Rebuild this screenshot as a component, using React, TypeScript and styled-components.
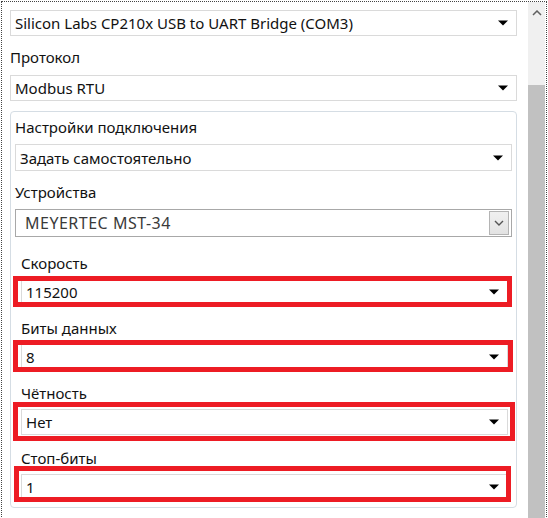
import React from "react";
import styled, { createGlobalStyle } from "styled-components";

const Global = createGlobalStyle`
  html, body { margin: 0; padding: 0; background: #ffffff; }
  body { font-family: "Noto Sans", "Open Sans", sans-serif; color: #111; }
`;

const Frame = styled.div`
  box-sizing: border-box;
  margin: 1px 0 0 1px;
  width: 546px;
  height: 520px;
  border: 1px dotted #444;
  border-bottom: none;
  display: grid;
  grid-template-columns: 1fr 17px;
  padding-right: 1px;
  overflow: hidden;
`;

const Content = styled.div`
  display: flex;
  flex-direction: column;
  padding: 8px 11px 0 8px;
  min-width: 0;
`;

const Label = styled.div<{ $top?: number; $bottom?: number }>`
  font-size: 15px;
  line-height: 22px;
  padding-top: ${(p) => p.$top ?? 10}px;
  padding-bottom: ${(p) => p.$bottom ?? 7}px;
  white-space: nowrap;
`;

const SelectBox = styled.div<{ $h?: number }>`
  box-sizing: border-box;
  position: relative;
  height: ${(p) => p.$h ?? 26}px;
  border: 1px solid #dadada;
  background: #fff;
  display: flex;
  align-items: center;
  padding: 0 8px 0 4px;
  font-size: 15px;
  color: #111;
  white-space: nowrap;
`;

const SelectText = styled.span`
  flex: 1;
  overflow: hidden;
`;

const Arrow = styled.svg`
  width: 10px;
  height: 6px;
  flex: none;
`;

const Group = styled.div`
  box-sizing: border-box;
  margin-top: 10px;
  border: 1px solid #d5dde4;
  border-radius: 4px;
  padding: 0 4px 0 4px;
  height: 397px;
  display: flex;
  flex-direction: column;
`;

const DeviceBox = styled.div`
  box-sizing: border-box;
  height: 28px;
  border: 1px solid #a8a8a8;
  background: #fff;
  display: flex;
  align-items: center;
  padding: 0 2px 0 9px;
  font-size: 16px;
  letter-spacing: 0.5px;
  color: #3a3a3a;
  white-space: nowrap;
`;

const DropButton = styled.div`
  box-sizing: border-box;
  width: 20px;
  height: 24px;
  border: 1px solid #b4b4b4;
  background: linear-gradient(#f0f0f0, #e3e3e3);
  display: flex;
  align-items: center;
  justify-content: center;
`;

const Nested = styled.div`
  display: flex;
  flex-direction: column;
  padding: 0 4px 0 6px;
`;

const Marked = styled.div`
  position: relative;
`;

const Highlight = styled.div<{ $t: number; $b: number; $l: number; $r: number }>`
  position: absolute;
  top: ${(p) => -p.$t}px;
  bottom: ${(p) => -p.$b}px;
  left: ${(p) => -p.$l}px;
  right: ${(p) => -p.$r}px;
  border: 5px solid #ed1c24;
  pointer-events: none;
`;

const Scrollbar = styled.div`
  background: #f0f0f0;
  display: flex;
  flex-direction: column;
`;

const ScrollUp = styled.div`
  height: 83px;
  display: flex;
  justify-content: center;
  padding-top: 8px;
  box-sizing: border-box;
`;

const Thumb = styled.div`
  flex: 1;
  background: #c1c1c1;
`;

const DownTriangle = () => (
  <Arrow viewBox="0 0 10 6">
    <path d="M0 0.5 H10 L5 5.5 Z" fill="#000" />
  </Arrow>
);

const Select = ({ value, h }: { value: string; h?: number }) => (
  <SelectBox $h={h}>
    <SelectText>{value}</SelectText>
    <DownTriangle />
  </SelectBox>
);

type Mark = { t: number; b: number; l: number; r: number };

const Field = ({ label, value, mark, top = 12, bottom = 5 }: { label: string; value: string; mark: Mark; top?: number; bottom?: number }) => (
  <>
    <Label $top={top} $bottom={bottom}>{label}</Label>
    <Marked>
      <Select value={value} />
      <Highlight $t={mark.t} $b={mark.b} $l={mark.l} $r={mark.r} />
    </Marked>
  </>
);

export default function App() {
  return (
    <>
      <Global />
      <Frame>
        <Content>
          <Select value="Silicon Labs CP210x USB to UART Bridge (COM3)" />
          <Label>Протокол</Label>
          <Select value="Modbus RTU" />
          <Group>
            <Label $top={4} $bottom={6}>Настройки подключения</Label>
            <Select value="Задать самостоятельно" h={27} />
            <Label $top={10} $bottom={6}>Устройства</Label>
            <DeviceBox>
              <SelectText>MEYERTEC MST-34</SelectText>
              <DropButton>
                <svg width="10" height="6" viewBox="0 0 10 6">
                  <path d="M1 1 L5 5 L9 1" fill="none" stroke="#555" strokeWidth="1.4" />
                </svg>
              </DropButton>
            </DeviceBox>
            <Nested>
              <Field label="Скорость" value="115200" top={15} bottom={5} mark={{ t: 3, b: 2, l: 8, r: 4 }} />
              <Field label="Биты данных" value="8" mark={{ t: 4, b: 2, l: 8, r: 5 }} />
              <Field label="Чётность" value="Нет" mark={{ t: 7, b: 6, l: 8, r: 7 }} />
              <Field label="Стоп-биты" value="1" mark={{ t: 8, b: 2, l: 7, r: 3 }} />
            </Nested>
          </Group>
        </Content>
        <Scrollbar>
          <ScrollUp>
            <svg width="10" height="6" viewBox="0 0 10 6">
              <path d="M1 5 L5 1 L9 5" fill="none" stroke="#606060" strokeWidth="1.5" />
            </svg>
          </ScrollUp>
          <Thumb />
        </Scrollbar>
      </Frame>
    </>
  );
}
